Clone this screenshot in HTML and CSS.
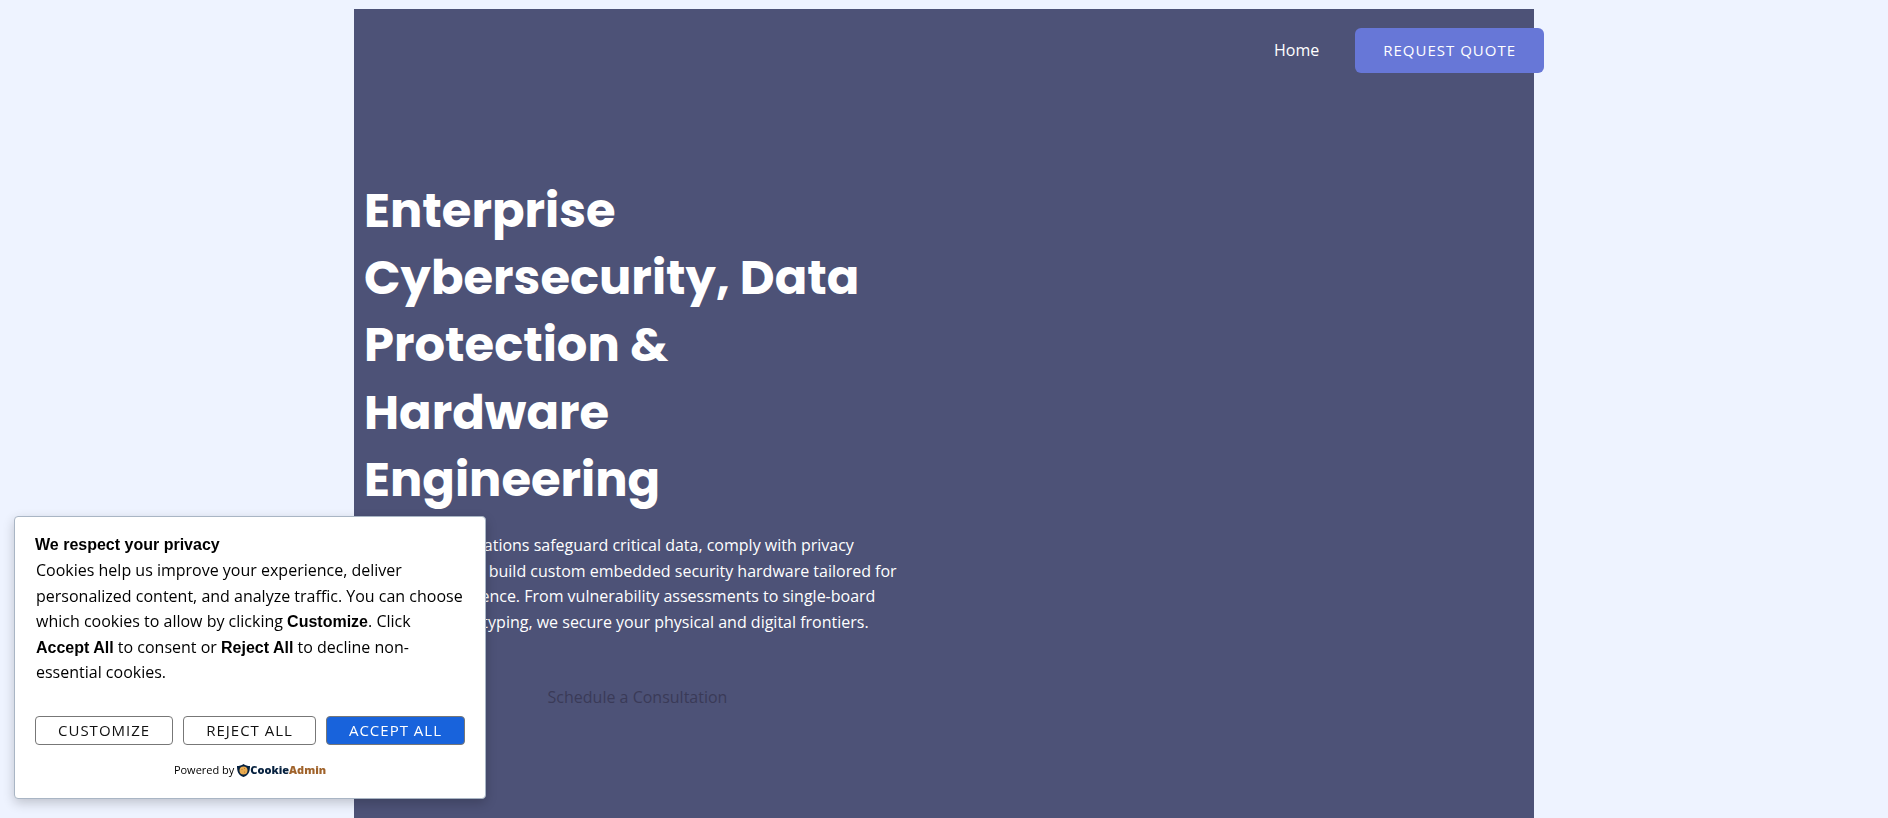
FILE: index.html
```
<!DOCTYPE html>
<html lang="en">
<head>
    <meta charset="UTF-8">
    <meta name="viewport" content="width=device-width, initial-scale=1">
    <title>Enterprise Cybersecurity</title>
    <link rel="stylesheet" href="styles.css">
</head>
<body>
<div class="page">
    <header class="top-bar">
        <nav>
            <a class="nav-link" href="#">Home</a>
        </nav>
        <a class="quote-btn" href="#quote">REQUEST QUOTE</a>
    </header>
    <main class="hero">
        <h1>Enterprise Cybersecurity, Data Protection &amp; Hardware Engineering</h1>
        <p class="lead">We help organizations safeguard critical data, comply with privacy<br>
            regulations, and build custom embedded security hardware tailored for<br>
            enterprise resilience. From vulnerability assessments to single-board<br>
            computer prototyping, we secure your physical and digital frontiers.</p>
        <a class="consult" href="#consult">Schedule a Consultation</a>
    </main>
</div>

<section class="cookie-box" aria-labelledby="cookie-title">
    <h2 id="cookie-title">We respect your privacy</h2>
    <p class="cookie-text">Cookies help us improve your experience, deliver personalized content, and analyze traffic. You can choose which cookies to allow by clicking <strong>Customize</strong>. Click <strong>Accept All</strong> to consent or <strong>Reject All</strong> to decline non-essential cookies.</p>
    <div class="cookie-buttons">
        <button type="button">CUSTOMIZE</button>
        <button type="button">REJECT ALL</button>
        <button type="button" class="accept">ACCEPT ALL</button>
    </div>
    <div class="powered">
        <span>Powered by</span>
        <a class="brand" href="#">
            <svg width="13" height="13" viewBox="0 0 26 26" aria-hidden="true">
                <path fill="#06213f" d="M13 0C9 3 5 4 0 4C0 14 2 22 13 26C24 22 26 14 26 4C21 4 17 3 13 0Z"/>
                <circle cx="13" cy="13" r="8" fill="#e9ab50"/>
                <circle cx="10" cy="11" r="1" fill="#a86a25"/>
                <circle cx="15" cy="9" r="1" fill="#a86a25"/>
                <circle cx="15" cy="16" r="1" fill="#a86a25"/>
            </svg>
            <span class="brand-name">Cookie<span class="brand-end">Admin</span></span>
        </a>
    </div>
</section>
</body>
</html>
```
FILE: styles.css
```
* {
    box-sizing: border-box;
}
body {
    margin: 0;
    padding-top: 9px;
    background-color: #eef3ff;
    color: #fff;
    font-family: "Open Sans", sans-serif;
    font-size: 16px;
    line-height: 1.6;
}
a {
    color: inherit;
    text-decoration: none;
}
.page {
    max-width: 1180px;
    min-height: calc(100vh - 9px);
    margin: 0 auto;
    background-color: #4d5277;
}

/* header */
.top-bar {
    display: flex;
    justify-content: flex-end;
    align-items: center;
    gap: 36px;
    padding-top: 19px;
    margin-right: -10px;
}
.quote-btn {
    padding: 0 28px;
    border-radius: 6px;
    background-color: #6777d7;
    font-size: 15px;
    line-height: 45px;
    letter-spacing: 1px;
}

/* hero */
.hero {
    display: flex;
    flex-direction: column;
    width: 50%;
    padding: 104px 33px 40px 10px;
}
h1 {
    margin: 0;
    font-family: Poppins, Inter, sans-serif;
    font-size: 48px;
    font-weight: 700;
    line-height: 1.4;
}
.lead {
    margin: 20px 0 50px;
    white-space: nowrap;
}
.consult {
    align-self: center;
    color: #3a3a57;
}

/* cookie notice */
.cookie-box {
    position: fixed;
    left: 14px;
    bottom: 19px;
    width: 472px;
    max-width: calc(100% - 28px);
    padding: 15px 20px 18px;
    border: 1px solid #a9b5c4;
    border-radius: 4px;
    background-color: #fff;
    box-shadow: 0 4px 12px rgba(0, 0, 0, 0.2);
    color: #000;
}
.cookie-box h2 {
    margin: 0;
    font-family: "Liberation Sans", Arial, sans-serif;
    font-size: 16px;
    line-height: 26px;
}
.cookie-text {
    margin: 0 0 30px;
    padding-left: 1px;
}
.cookie-text strong {
    font-family: "Liberation Sans", Arial, sans-serif;
}
.cookie-buttons {
    display: flex;
    gap: 10px;
}
.cookie-buttons button {
    flex: 1 1 auto;
    height: 29px;
    padding: 0 0 2px;
    border: 1px solid #777;
    border-radius: 4px;
    background-color: #fff;
    color: #111;
    font-family: inherit;
    font-size: 15px;
    letter-spacing: 1px;
    cursor: pointer;
}
.cookie-buttons .accept {
    background-color: #1863dc;
    color: #fff;
}
.powered {
    display: flex;
    justify-content: center;
    align-items: center;
    gap: 3px;
    margin-top: 15px;
    font-size: 11px;
    line-height: 20px;
}
.brand {
    display: flex;
    align-items: center;
}
.brand-name {
    color: #06213f;
    font-family: "Open Sans", sans-serif;
    font-weight: 800;
}
.brand-end {
    color: #a0632b;
}
```
